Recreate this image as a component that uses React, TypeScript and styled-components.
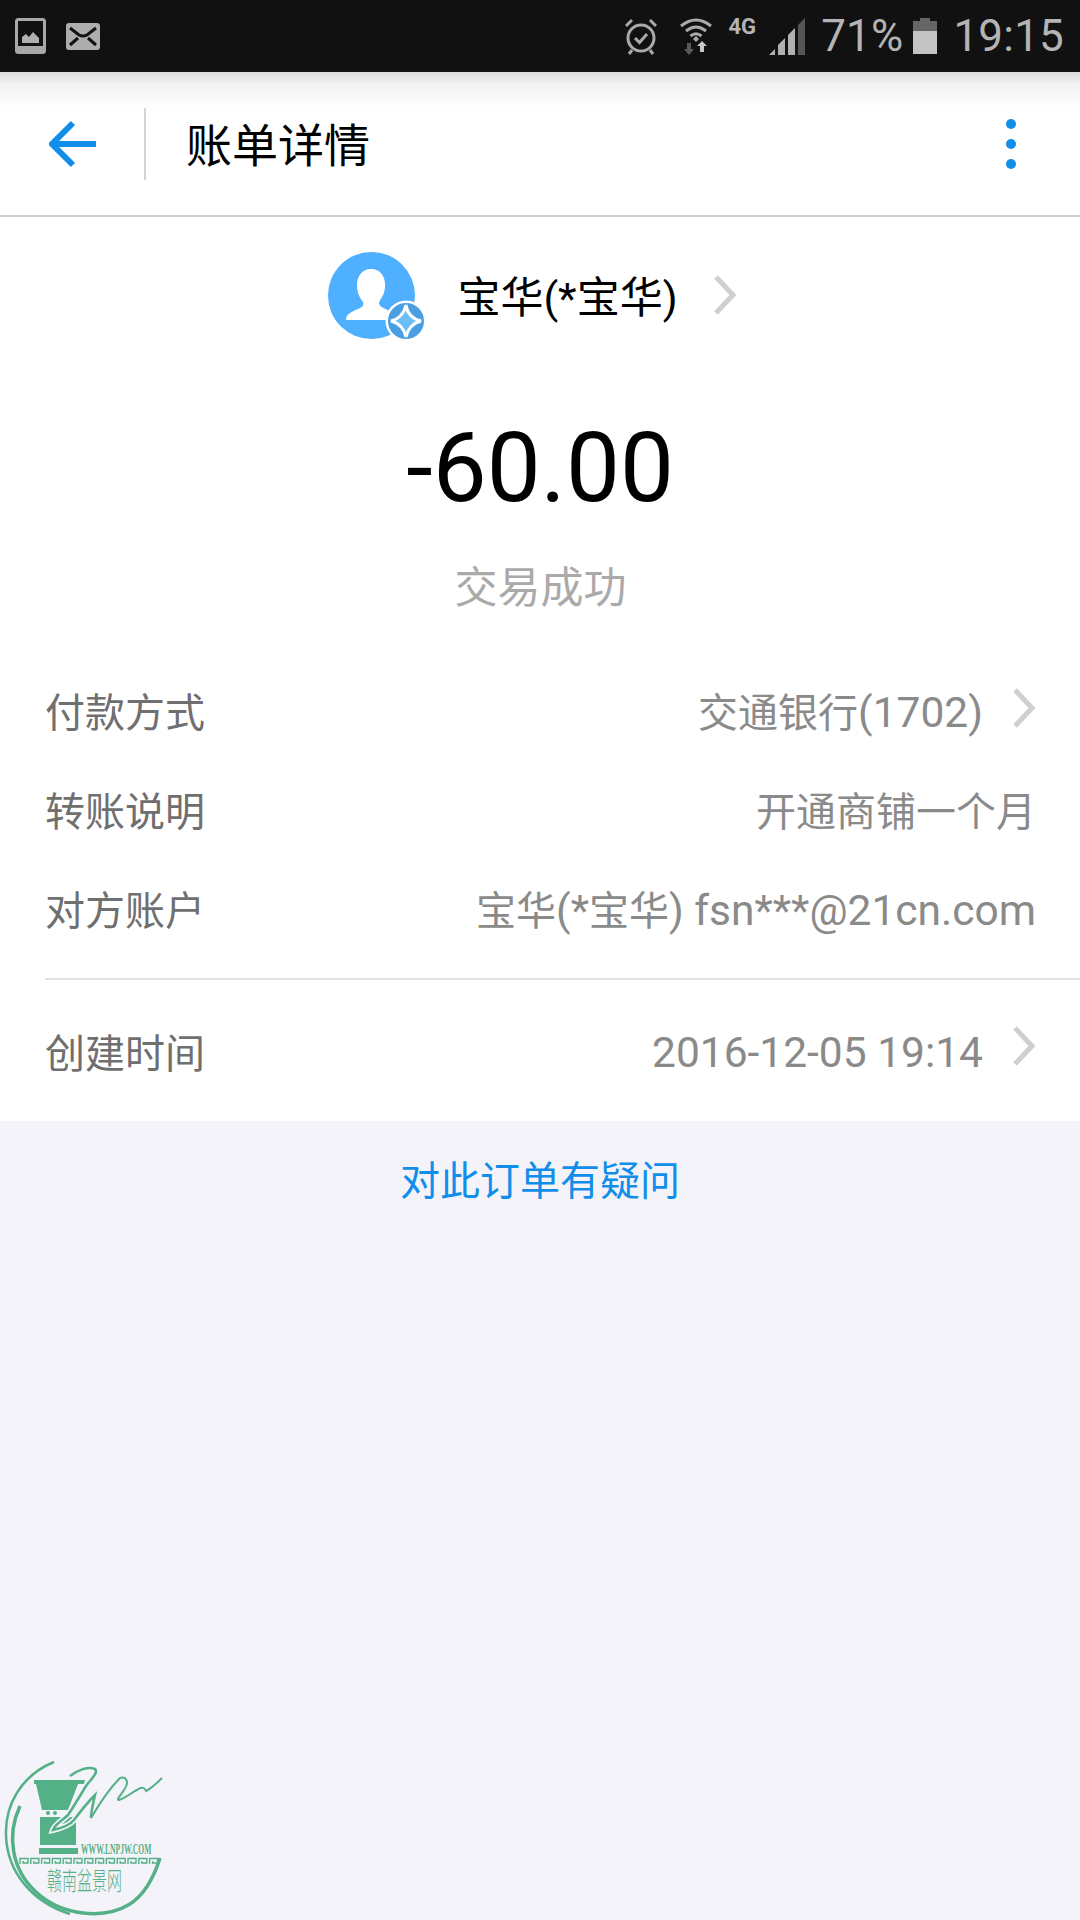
import styled, { createGlobalStyle } from "styled-components";

const GlobalStyle = createGlobalStyle`
    html, body {
        margin: 0;
        padding: 0;
        background: #f3f3f9;
    }
    body {
        font-family: Roboto, "Noto Sans CJK SC", sans-serif;
    }
`;

const Page = styled.div`
    position: relative;
    width: 1080px;
    height: 1920px;
    overflow: hidden;
    background: #f3f3f9;
`;

const StatusBar = styled.div`
    height: 72px;
    background: #111111;
    display: flex;
    align-items: center;
    padding: 0 16px 0 15px;
    color: #b4b4b4;
`;

const StatusLeft = styled.div`
    display: flex;
    align-items: center;
    gap: 20px;
    flex: 1;
`;

const StatusRight = styled.div`
    display: flex;
    align-items: center;
`;

const StatusSlot = styled.span<{ $left: number }>`
    display: flex;
    margin-left: ${(p) => p.$left}px;
`;

const StatusText = styled.span<{ $left: number }>`
    font-size: 44px;
    line-height: 72px;
    margin-left: ${(p) => p.$left}px;
    letter-spacing: 0.2px;
`;

const FourG = styled.span`
    font-size: 22px;
    font-weight: 700;
    line-height: 20px;
    margin: -18px 0 0 17px;
    color: #b4b4b4;
`;

const Toolbar = styled.div`
    height: 143px;
    display: flex;
    align-items: center;
    background: linear-gradient(#dadada 0, #f3f3f3 12px, #fdfdfd 34px, #ffffff 44px);
    border-bottom: 2px solid #cfcfcf;
    padding-right: 64px;
`;

const BackButton = styled.div`
    width: 146px;
    height: 72px;
    display: flex;
    align-items: center;
    padding-left: 49px;
    box-sizing: border-box;
    border-right: 2px solid #d4d4d4;
`;

const Title = styled.h1`
    margin: -4px 0 0 40px;
    flex: 1;
    font-size: 46px;
    font-weight: 400;
    color: #000;
`;

const MoreDots = styled.div`
    display: flex;
    flex-direction: column;
    gap: 10px;
`;

const Dot = styled.span`
    width: 10px;
    height: 10px;
    border-radius: 50%;
    background: #108ee9;
`;

const Sheet = styled.div`
    background: #fff;
    height: 904px;
    display: flex;
    flex-direction: column;
`;

const Payee = styled.div`
    display: flex;
    align-items: center;
    justify-content: center;
    padding: 34px 12px 0 0;
    height: 88px;
`;

const Avatar = styled.div`
    position: relative;
    width: 87px;
    height: 87px;
    border-radius: 50%;
    background: #4fb0ff;
    margin-left: -3px;
`;

const Badge = styled.div`
    position: absolute;
    right: -12px;
    bottom: -3px;
    width: 42px;
    height: 42px;
`;

const PayeeName = styled.div`
    margin: -2px 35px 0 42px;
    font-size: 43px;
    color: #000;
    white-space: nowrap;
`;

const Amount = styled.div`
    margin-top: 73px;
    text-align: center;
    font-size: 96px;
    line-height: 112px;
    color: #000;
`;

const Status = styled.div`
    margin-top: 36px;
    text-align: center;
    font-size: 43px;
    line-height: 56px;
    color: #aaaaaa;
    padding-left: 1px;
`;

const Rows = styled.div<{ $top?: number }>`
    margin-top: ${(p) => p.$top ?? 0}px;
    padding: 0 44px 0 45px;
`;

const Row = styled.div`
    height: 99px;
    display: flex;
    align-items: center;
    justify-content: space-between;
    font-size: 40px;
`;

const Label = styled.span`
    color: #6f6f6f;
`;

const Value = styled.span`
    display: flex;
    align-items: center;
    gap: 29px;
    color: #8a8a8a;
    white-space: nowrap;
`;

// the digits and latin letters run a little larger than the chinese on this screen
const Latin = styled.span`
    font-size: 42.5px;
`;

const DateText = styled(Latin)`
    padding-top: 3px;
`;

const ChevronSlot = styled.span<{ $lift: number }>`
    display: flex;
    margin-bottom: ${(p) => p.$lift}px;
`;

const Divider = styled.div`
    height: 2px;
    background: #e2e2e2;
    margin: 21px 0 21px 45px;
`;

const Help = styled.div`
    margin-top: 36px;
    text-align: center;
    font-size: 40px;
    line-height: 50px;
    color: #108ee9;
`;

const Watermark = styled.div`
    position: absolute;
    left: 0;
    bottom: 0;
    width: 180px;
    height: 180px;
`;

const Chevron = ({ w = 24, h = 42, c = "#cfcfcf" }: { w?: number; h?: number; c?: string }) => (
    <svg width={w} height={h} viewBox="0 0 24 42">
        <path d="M3 3 L20 21 L3 39" fill="none" stroke={c} strokeWidth="5" />
    </svg>
);

const StatusIcons = () => (
    <>
        <svg width="31" height="36" viewBox="0 0 31 36">
            <rect x="1.5" y="1.5" width="28" height="33" rx="2" fill="none" stroke="#a8a8a8" strokeWidth="3" />
            <rect x="3" y="3" width="25" height="25" fill="#111" />
            <rect x="3" y="28" width="25" height="5" fill="#a8a8a8" />
            <path d="M7 25 V19 L11 16 L14 19 L18 14 L24 20 V25 Z" fill="#b0b0b0" />
        </svg>
        <svg width="34" height="27" viewBox="0 0 34 27">
            <rect width="34" height="27" rx="3" fill="#adadad" />
            <path d="M4 5 L13 12 Q17 14 21 12 L30 5 M4 22 L12 15 M30 22 L22 15" fill="none" stroke="#111" strokeWidth="3" />
        </svg>
    </>
);

const Alarm = () => (
    <svg width="32" height="37" viewBox="0 0 32 37">
        <circle cx="16" cy="20" r="13" fill="none" stroke="#aaa" strokeWidth="3" />
        <path d="M10 20 L14.5 24.5 L22 16" fill="none" stroke="#aaa" strokeWidth="3" />
        <path d="M1 8 L7 2 M31 8 L25 2 M7 32 L4 36 M25 32 L28 36" fill="none" stroke="#aaa" strokeWidth="3" />
    </svg>
);

const Wifi = () => (
    <svg width="32" height="38" viewBox="0 0 32 38">
        <path d="M1 9 Q16 -3 31 9 M6 14 Q16 6 26 14 M10.5 19 Q16 14.5 21.5 19" fill="none" stroke="#aaa" strokeWidth="3" />
        <path d="M13 22 L16 19 L19 22 L16 25 Z" fill="#aaa" />
        <path d="M7 26 V32 H4 L9 38 L14 32 H11 V26 Z" fill="#5a5a5a" />
        <path d="M20 35 V29 H17 L22 24 L27 29 H24 V35 Z" fill="#c8c8c8" />
    </svg>
);

const Signal = () => (
    <svg width="36" height="37" viewBox="0 0 36 37">
        <path d="M0 37 L6 31 V37 Z" fill="#b0b0b0" />
        <path d="M9 37 V27 L16 20 V37 Z" fill="#b0b0b0" />
        <path d="M19 37 V17 L26 10 V37 Z" fill="#b0b0b0" />
        <path d="M29 37 V7 L36 0 V37 Z" fill="#555" />
    </svg>
);

const Battery = () => (
    <svg width="24" height="36" viewBox="0 0 24 36">
        <path d="M7 0 H17 V3 H24 V13 H0 V3 H7 Z" fill="#666" />
        <rect y="13" width="24" height="23" fill="#c4c4c4" />
    </svg>
);

const GREEN = "#54b087";
const DRAGON =
    "M70 36 C78 30 88 26 95 29 C99 33 90 40 86 46 C80 56 74 66 68 75 C62 81 55 84 53 90 C62 88 70 85 74 80 C80 72 88 62 95 55 C93 64 91 72 91 78";

const Logo = () => (
    <svg width="180" height="180" viewBox="0 0 180 180">
        {/* ring */}
        <path d="M54 22 C20 36 5 66 6 95 C7 132 32 162 70 174" fill="none" stroke={GREEN} strokeWidth="2.5" />
        <path d="M20 66 C6 96 12 130 36 152 C62 176 104 180 130 164 C144 155 153 140 160 118" fill="none" stroke={GREEN} strokeWidth="3.5" />
        {/* vessel */}
        <path d="M34 40 H85 L84 44 H78 L68 70 H42 L36 44 H34 Z" fill={GREEN} />
        <path d="M40 77 H76 V105 H40 Z" fill={GREEN} />
        <path d="M39 108 H78 V114 H39 Z" fill={GREEN} />
        <circle cx="48" cy="73" r="2" fill={GREEN} />
        <circle cx="55" cy="73" r="2" fill={GREEN} />
        {/* dragon */}
        <path d={DRAGON} fill="none" stroke="#f3f3f9" strokeWidth="6" />
        <path d={DRAGON} fill="none" stroke={GREEN} strokeWidth="2.5" />
        <path
            d="M91 78 C98 66 110 48 120 38 C126 36 130 42 124 50 C120 56 116 60 119 60 C126 58 132 52 137 50 C142 46 145 48 146 51 C150 49 156 44 162 38"
            fill="none"
            stroke={GREEN}
            strokeWidth="2"
        />
        {/* url */}
        <g transform="translate(81 114) scale(0.508 1)">
            <text x="0" y="0" fontFamily="Liberation Serif" fontSize="15" fontWeight="700" fill={GREEN}>
                WWW.LNPJW.COM
            </text>
        </g>
        {/* meander band */}
        {Array.from({ length: 13 }).map((_, i) => (
            <path
                key={i}
                d={`M${20 + i * 10.8} 124 V118.5 H${28 + i * 10.8} V123 H${23 + i * 10.8} V121`}
                fill="none"
                stroke={GREEN}
                strokeWidth="1.4"
            />
        ))}
        {/* seal text */}
        <g transform="translate(47 150) scale(1 1.7)">
            <text x="0" y="0" fontFamily="Noto Sans CJK SC" fontSize="15" fontWeight="300" fill={GREEN}>
                赣南盆景网
            </text>
        </g>
    </svg>
);

export default function App() {
    return (
        <Page>
            <GlobalStyle />
            <StatusBar>
                <StatusLeft>
                    <StatusIcons />
                </StatusLeft>
                <StatusRight>
                    <Alarm />
                    <StatusSlot $left={23}>
                        <Wifi />
                    </StatusSlot>
                    <FourG>4G</FourG>
                    <StatusSlot $left={13}>
                        <Signal />
                    </StatusSlot>
                    <StatusText $left={16}>71%</StatusText>
                    <StatusSlot $left={10}>
                        <Battery />
                    </StatusSlot>
                    <StatusText $left={16}>19:15</StatusText>
                </StatusRight>
            </StatusBar>
            <Toolbar>
                <BackButton>
                    <svg width="48" height="48" viewBox="0 0 48 48">
                        <path d="M24 3 L3 24 L24 45 M3 24 H47" fill="none" stroke="#108ee9" strokeWidth="6" />
                    </svg>
                </BackButton>
                <Title>账单详情</Title>
                <MoreDots>
                    <Dot />
                    <Dot />
                    <Dot />
                </MoreDots>
            </Toolbar>
            <Sheet>
                <Payee>
                    <Avatar>
                        <svg width="87" height="87" viewBox="0 0 87 87">
                            <path
                                d="M43 17 C54 17 58 27 57 36 C56 44 52 47 51 51 C51 55 56 56 64 60 C70 63 71 68 71 68 H18 C18 62 23 60 30 57 C35 55 36 53 35 50 C31 45 29 40 29 33 C29 24 34 17 43 17 Z"
                                fill="#ffffff"
                            />
                        </svg>
                        <Badge>
                            <svg width="42" height="42" viewBox="0 0 42 42">
                                <circle cx="21" cy="21" r="20.5" fill="#fff" />
                                <circle cx="21" cy="21" r="18" fill="#4a9fe3" />
                                <path d="M21 5 Q23 18 36 21 Q24 24 21 37 Q18 24 6 21 Q18 18 21 5 Z" fill="#6dbdf7" stroke="#fff" strokeWidth="3" />
                            </svg>
                        </Badge>
                    </Avatar>
                    <PayeeName>宝华(*宝华)</PayeeName>
                    <Chevron />
                </Payee>
                <Amount>-60.00</Amount>
                <Status>交易成功</Status>
                <Rows $top={44}>
                    <Row>
                        <Label>付款方式</Label>
                        <Value>
                            <span>
                                交通银行<Latin>(1702)</Latin>
                            </span>
                            <ChevronSlot $lift={3}>
                                <Chevron />
                            </ChevronSlot>
                        </Value>
                    </Row>
                    <Row>
                        <Label>转账说明</Label>
                        <Value>开通商铺一个月</Value>
                    </Row>
                    <Row>
                        <Label>对方账户</Label>
                        <Value>
                            <span>
                                宝华<Latin>(*</Latin>宝华<Latin>) fsn***@21cn.com</Latin>
                            </span>
                        </Value>
                    </Row>
                </Rows>
                <Divider />
                <Rows>
                    <Row>
                        <Label>创建时间</Label>
                        <Value>
                            <DateText>2016-12-05 19:14</DateText>
                            <ChevronSlot $lift={9}>
                                <Chevron />
                            </ChevronSlot>
                        </Value>
                    </Row>
                </Rows>
            </Sheet>
            <Help>对此订单有疑问</Help>
            <Watermark>
                <Logo />
            </Watermark>
        </Page>
    );
}
